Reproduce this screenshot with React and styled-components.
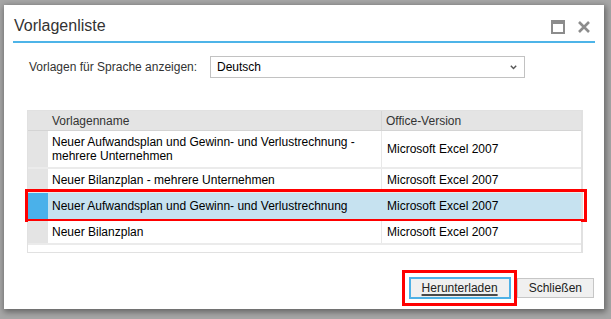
import React from "react";
import styled, { createGlobalStyle } from "styled-components";

const GlobalStyle = createGlobalStyle`
  html, body {
    margin: 0;
    padding: 0;
    background: #a6a6a6;
  }
  body {
    font-family: "Liberation Sans", Arial, sans-serif;
  }
`;

const Screen = styled.div`
  width: 611px;
  height: 319px;
  box-sizing: border-box;
  padding: 5px 0 0 4px;
  overflow: hidden;
  background: #a6a6a6;
`;

const Dialog = styled.div`
  display: flex;
  flex-direction: column;
  width: 600px;
  height: 304px;
  background: #fff;
  box-shadow: 1px 2px 6px 1px rgba(0, 0, 0, 0.4);
`;

const TitleBar = styled.div`
  display: flex;
  align-items: flex-end;
  height: 38px;
  box-sizing: border-box;
  margin: 0 9px;
  padding-bottom: 6px;
  border-bottom: 2px solid #4db4e8;
`;

const Title = styled.h1`
  margin: 0 0 0 1px;
  font-size: 16px;
  font-weight: normal;
  line-height: 18px;
  color: #333;
`;

const WindowButtons = styled.div`
  display: flex;
  align-items: center;
  gap: 13px;
  height: 14px;
  margin: 0 5px 1px auto;
`;

const Body = styled.div`
  display: flex;
  flex-direction: column;
  padding: 13px 0 0 23px;
`;

const LangRow = styled.div`
  display: flex;
  align-items: center;
  height: 22px;
  padding-left: 2px;
`;

const Label = styled.span`
  width: 181px;
  font-size: 12px;
  color: #333;
`;

const Select = styled.div`
  display: flex;
  align-items: center;
  justify-content: space-between;
  width: 315px;
  height: 22px;
  box-sizing: border-box;
  padding: 0 7px 0 6px;
  border: 1px solid #c2c2c2;
  font-size: 12px;
  color: #000;
`;

const Table = styled.div`
  width: 556px;
  margin-top: 32px;
  box-sizing: border-box;
  border: 1px solid #e1e1e1;
  border-right-width: 2px;
  font-size: 12px;
`;

const columns = "20px 333px 1fr";

const HeaderRow = styled.div`
  display: grid;
  grid-template-columns: ${columns};
  align-items: stretch;
  height: 20px;
  box-sizing: border-box;
  background: #e4e4e4;
  border-bottom: 1px solid #d4d4d4;
  color: #333;
`;

const HeadCell = styled.div`
  display: flex;
  align-items: center;
  padding-left: 4px;
  border-left: ${(p) => (p.$divider ? "1px solid #d6d6d6" : "none")};
`;

const Row = styled.div`
  position: relative;
  display: grid;
  grid-template-columns: ${columns};
  background: ${(p) => (p.$selected ? "#c6e2f0" : "#fff")};
  border-bottom: 2px solid #ebebeb;
  line-height: 14px;
  color: #000;

  ${(p) =>
    p.$selected &&
    `
    &::after {
      content: "";
      position: absolute;
      top: -4px;
      bottom: -3px;
      left: -3px;
      right: -6px;
      border: 3px solid #ff0000;
      pointer-events: none;
    }
  `}
`;

const Marker = styled.div`
  background: ${(p) => (p.$selected ? "#4ab1ea" : "#e4e4e4")};
`;

const NameCell = styled.div`
  padding: ${(p) => (p.$selected ? "6px 4px" : "4px 4px")};
`;

const VersionCell = styled.div`
  display: flex;
  align-items: center;
  padding: 0 5px;
  border-left: 1px solid ${(p) => (p.$selected ? "transparent" : "#e8e8e8")};
`;

const Band = styled.div`
  height: 7px;
  background: #fff;
`;

const Footer = styled.div`
  display: flex;
  justify-content: flex-end;
  align-items: center;
  gap: 7px;
  margin-top: auto;
  padding: 0 10px 11px 0;
`;

const Button = styled.button`
  position: relative;
  height: 20px;
  box-sizing: border-box;
  padding: 0 11px;
  border: 1px solid ${(p) => (p.$focused ? "#4eb1e6" : "#c6c6c6")};
  box-shadow: ${(p) => (p.$focused ? "0 0 0 1px #4eb1e6" : "none")};
  background: #f0f0f0;
  font-family: "Liberation Sans", Arial, sans-serif;
  font-size: 12px;
  color: #222;
  cursor: pointer;

  ${(p) =>
    p.$focused &&
    `
    &::after {
      content: "";
      position: absolute;
      top: -9px;
      bottom: -9px;
      left: -9px;
      right: -8px;
      border: 3px solid #ff0000;
      pointer-events: none;
    }
  `}
`;

const Underlined = styled.span`
  text-decoration: underline;
  text-decoration-thickness: 2px;
  text-underline-offset: 2px;
  text-decoration-color: #4a4a4a;
`;

const MaximizeIcon = () => (
  <svg width="14" height="14" viewBox="0 0 14 14">
    <rect x="1" y="1" width="12" height="12" fill="none" stroke="#8c8c8c" strokeWidth="2" />
    <rect x="0" y="0" width="14" height="4" fill="#8c8c8c" />
  </svg>
);

const CloseIcon = () => (
  <svg width="12" height="12" viewBox="0 0 12 12">
    <path d="M1 1 L11 11 M11 1 L1 11" stroke="#8c8c8c" strokeWidth="2.6" />
  </svg>
);

const Chevron = () => (
  <svg width="7" height="5" viewBox="0 0 7 5">
    <path d="M0.8 0.8 L3.5 3.6 L6.2 0.8" fill="none" stroke="#555" strokeWidth="1.4" />
  </svg>
);

const templates = [
  {
    name: "Neuer Aufwandsplan und Gewinn- und Verlustrechnung - mehrere Unternehmen",
    version: "Microsoft Excel 2007",
  },
  { name: "Neuer Bilanzplan - mehrere Unternehmen", version: "Microsoft Excel 2007" },
  {
    name: "Neuer Aufwandsplan und Gewinn- und Verlustrechnung",
    version: "Microsoft Excel 2007",
    selected: true,
  },
  { name: "Neuer Bilanzplan", version: "Microsoft Excel 2007" },
];

const App = () => {
  return (
    <Screen>
      <GlobalStyle />
      <Dialog>
        <TitleBar>
          <Title>Vorlagenliste</Title>
          <WindowButtons>
            <MaximizeIcon />
            <CloseIcon />
          </WindowButtons>
        </TitleBar>
        <Body>
          <LangRow>
            <Label>Vorlagen für Sprache anzeigen:</Label>
            <Select>
              <span>Deutsch</span>
              <Chevron />
            </Select>
          </LangRow>
          <Table>
            <HeaderRow>
              <div />
              <HeadCell>Vorlagenname</HeadCell>
              <HeadCell $divider>Office-Version</HeadCell>
            </HeaderRow>
            {templates.map((t) => (
              <Row key={t.name} $selected={t.selected}>
                <Marker $selected={t.selected} />
                <NameCell $selected={t.selected}>{t.name}</NameCell>
                <VersionCell $selected={t.selected}>{t.version}</VersionCell>
              </Row>
            ))}
            <Band />
          </Table>
        </Body>
        <Footer>
          <Button $focused>
            <Underlined>Herunterladen</Underlined>
          </Button>
          <Button>Schließen</Button>
        </Footer>
      </Dialog>
    </Screen>
  );
};

export default App;
